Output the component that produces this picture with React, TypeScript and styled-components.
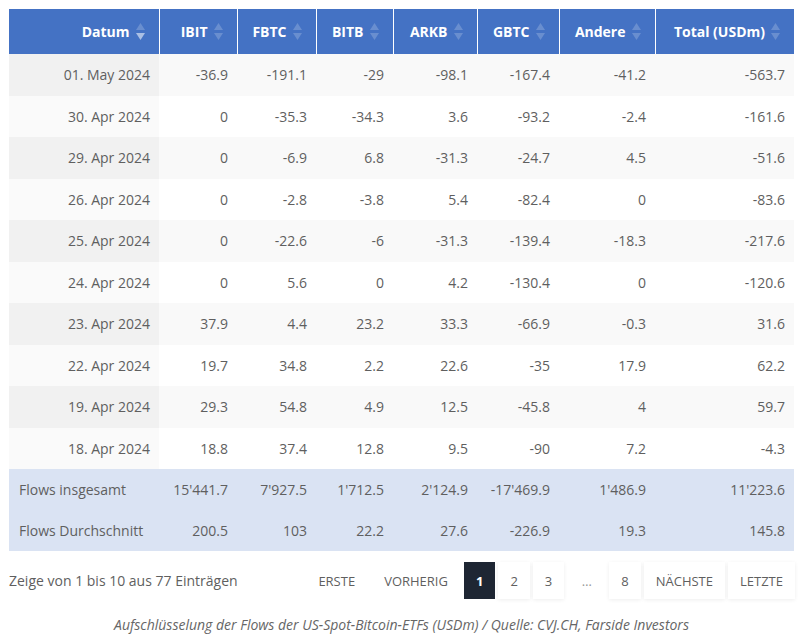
import React from 'react'
import styled, { createGlobalStyle, css } from 'styled-components'

const GlobalStyle = createGlobalStyle`
  html, body {
    margin: 0;
    padding: 0;
    background: #ffffff;
  }
  body {
    font-family: 'Open Sans', 'Noto Sans', sans-serif;
    color: #5f5f5f;
  }
`

const Page = styled.div`
  padding: 9px 9px 0 9px;
  width: 785px;
`

const Table = styled.table`
  width: 785px;
  border-collapse: collapse;
  table-layout: fixed;
  font-size: 14px;
`

const HeadCell = styled.th`
  background: #4472c4;
  color: #fff;
  font-weight: 700;
  font-size: 14px;
  height: 45px;
  padding: 0 14px 0 8px;
  text-align: right;
  border-right: 1.5px solid #fff;
  white-space: nowrap;
  box-sizing: border-box;

  &:last-child {
    border-right: none;
  }
`

const HeadInner = styled.span`
  display: inline-flex;
  align-items: center;
  gap: 6px;
`

const SortIcon = styled.svg`
  width: 9px;
  height: 17px;
  flex-shrink: 0;
`

const Row = styled.tr<{ $odd: boolean }>`
  td {
    background: ${({ $odd }) => ($odd ? '#f9f9f9' : '#ffffff')};
  }
  td:first-child {
    background: ${({ $odd }) => ($odd ? '#f1f1f1' : '#fafafa')};
  }
`

const Cell = styled.td`
  height: 41.5px;
  padding: 0 9px 0 8px;
  text-align: right;
  color: #5f5f5f;
  white-space: nowrap;
  box-sizing: border-box;
`

const FootRow = styled.tr`
  background: #dae3f3;
`

const FootCell = styled.td<{ $label?: boolean }>`
  height: 41px;
  padding: 0 9px 0 10px;
  text-align: ${({ $label }) => ($label ? 'left' : 'right')};
  color: #5f5f5f;
  white-space: nowrap;
  box-sizing: border-box;
`

const Bottom = styled.div`
  display: flex;
  align-items: center;
  justify-content: space-between;
  margin-top: 11px;
  height: 37px;
`

const Info = styled.div`
  font-size: 14px;
  color: #5f5f5f;
`

const Pager = styled.div`
  display: flex;
  align-items: center;
  gap: 3px;
  margin-right: -1px;
`

const PageBtn = styled.span<{ $active?: boolean; $disabled?: boolean; $plain?: boolean }>`
  display: inline-flex;
  align-items: center;
  justify-content: center;
  height: 37px;
  min-width: 31px;
  padding: 0 12px;
  box-sizing: border-box;
  font-size: 13px;
  color: #5f5f5f;
  background: #fff;
  box-shadow: 0 1px 4px rgba(0, 0, 0, 0.07);
  text-transform: uppercase;

  ${({ $disabled, $plain }) =>
    ($disabled || $plain) &&
    css`
      box-shadow: none;
      background: transparent;
    `}

  ${({ $plain }) =>
    $plain &&
    css`
      min-width: 39px;
      color: #999;
    `}

  ${({ $disabled }) =>
    $disabled &&
    css`
      padding: 0 13px;
    `}

  ${({ $active }) =>
    $active &&
    css`
      background: #1e2633;
      color: #fff;
      font-weight: 700;
      box-shadow: none;
    `}
`

const Caption = styled.p`
  margin: 16px 0 0;
  text-align: center;
  font-style: italic;
  font-size: 14px;
  color: #666;
`

const columns = [
  { label: 'Datum', width: 150, active: true },
  { label: 'IBIT', width: 78 },
  { label: 'FBTC', width: 79 },
  { label: 'BITB', width: 77 },
  { label: 'ARKB', width: 84 },
  { label: 'GBTC', width: 82 },
  { label: 'Andere', width: 96 },
  { label: 'Total (USDm)', width: 139 }
]

const rows = [
  ['01. May 2024', '-36.9', '-191.1', '-29', '-98.1', '-167.4', '-41.2', '-563.7'],
  ['30. Apr 2024', '0', '-35.3', '-34.3', '3.6', '-93.2', '-2.4', '-161.6'],
  ['29. Apr 2024', '0', '-6.9', '6.8', '-31.3', '-24.7', '4.5', '-51.6'],
  ['26. Apr 2024', '0', '-2.8', '-3.8', '5.4', '-82.4', '0', '-83.6'],
  ['25. Apr 2024', '0', '-22.6', '-6', '-31.3', '-139.4', '-18.3', '-217.6'],
  ['24. Apr 2024', '0', '5.6', '0', '4.2', '-130.4', '0', '-120.6'],
  ['23. Apr 2024', '37.9', '4.4', '23.2', '33.3', '-66.9', '-0.3', '31.6'],
  ['22. Apr 2024', '19.7', '34.8', '2.2', '22.6', '-35', '17.9', '62.2'],
  ['19. Apr 2024', '29.3', '54.8', '4.9', '12.5', '-45.8', '4', '59.7'],
  ['18. Apr 2024', '18.8', '37.4', '12.8', '9.5', '-90', '7.2', '-4.3']
]

const footer = [
  ['Flows insgesamt', "15'441.7", "7'927.5", "1'712.5", "2'124.9", "-17'469.9", "1'486.9", "11'223.6"],
  ['Flows Durchschnitt', '200.5', '103', '22.2', '27.6', '-226.9', '19.3', '145.8']
]

const Sort = ({ active }: { active?: boolean }) => (
  <SortIcon viewBox="0 0 9 17">
    <polygon points="4.5,0 9,7 0,7" fill="#ffffff" opacity={0.2} />
    <polygon points="0,10 9,10 4.5,17" fill="#ffffff" opacity={active ? 0.55 : 0.2} />
  </SortIcon>
)

export default function App() {
  return (
    <>
      <GlobalStyle />
      <Page>
        <Table>
          <colgroup>
            {columns.map((c) => (
              <col key={c.label} style={{ width: c.width }} />
            ))}
          </colgroup>
          <thead>
            <tr>
              {columns.map((c) => (
                <HeadCell key={c.label}>
                  <HeadInner>
                    {c.label}
                    <Sort active={c.active} />
                  </HeadInner>
                </HeadCell>
              ))}
            </tr>
          </thead>
          <tbody>
            {rows.map((r, i) => (
              <Row key={r[0]} $odd={i % 2 === 0}>
                {r.map((v, j) => (
                  <Cell key={j}>{v}</Cell>
                ))}
              </Row>
            ))}
          </tbody>
          <tfoot>
            {footer.map((r) => (
              <FootRow key={r[0]}>
                {r.map((v, j) => (
                  <FootCell key={j} $label={j === 0}>
                    {v}
                  </FootCell>
                ))}
              </FootRow>
            ))}
          </tfoot>
        </Table>
        <Bottom>
          <Info>Zeige von 1 bis 10 aus 77 Einträgen</Info>
          <Pager>
            <PageBtn $disabled>Erste</PageBtn>
            <PageBtn $disabled>Vorherig</PageBtn>
            <PageBtn $active>1</PageBtn>
            <PageBtn>2</PageBtn>
            <PageBtn>3</PageBtn>
            <PageBtn $plain>…</PageBtn>
            <PageBtn>8</PageBtn>
            <PageBtn>Nächste</PageBtn>
            <PageBtn>Letzte</PageBtn>
          </Pager>
        </Bottom>
        <Caption>
          Aufschlüsselung der Flows der US-Spot-Bitcoin-ETFs (USDm) / Quelle: CVJ.CH, Farside Investors
        </Caption>
      </Page>
    </>
  )
}
